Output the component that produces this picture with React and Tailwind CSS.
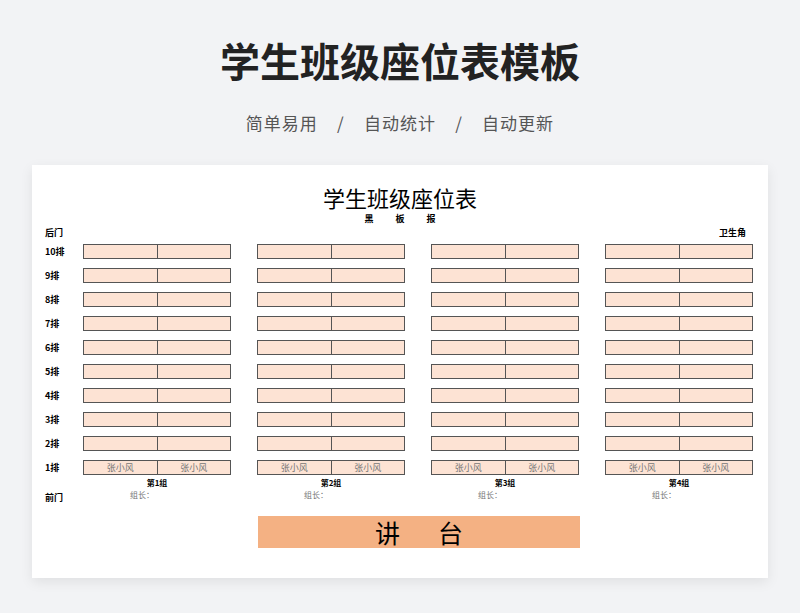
export default function App() {
  const rows = ["10排","9排","8排","7排","6排","5排","4排","3排","2排","1排"];
  const groups = [0,1,2,3];
  const f = { fontFamily: '"Noto Sans CJK SC", sans-serif' };
  return (
    <div className="w-[800px] h-[613px] bg-[#f2f3f5] flex flex-col items-center" style={f}>
      <div className="mt-[34px] text-[40px] leading-[52px] font-bold text-[#222]">学生班级座位表模板</div>
      <div className="mt-[25px] text-[17px] leading-[24px] text-[#555] tracking-[1px]">简单易用&nbsp;&nbsp;&nbsp;&nbsp;/&nbsp;&nbsp;&nbsp;&nbsp;自动统计&nbsp;&nbsp;&nbsp;&nbsp;/&nbsp;&nbsp;&nbsp;&nbsp;自动更新</div>
      <div className="mt-[30px] w-[736px] h-[413px] bg-white shadow-[0_4px_12px_rgba(0,0,0,0.08)] relative text-black">
        <div className="text-center text-[22px] leading-[28px] mt-[18px]">学生班级座位表</div>
        <div className="flex items-center h-[14px] mt-[1px]">
          <div className="w-[51px]"></div>
          <div className="flex-1 text-center text-[9px] font-bold tracking-[22px] pl-[22px]">黑板报</div>
          <div className="w-[51px]"></div>
        </div>
        <div className="flex justify-between text-[9px] font-bold px-[13px] pr-[22px] h-[14px] items-center">
          <span>后门</span><span>卫生角</span>
        </div>
        <div className="mt-[4px] flex flex-col gap-[9px]">
          {rows.map((r, i) => (
            <div key={r} className="flex items-center h-[15px]">
              <div className="w-[51px] pl-[13px] text-[9px] font-bold">{r}</div>
              <div className="flex gap-[26px]">
                {groups.map(g => (
                  <div key={g} className="w-[148px] h-[15px] flex border border-[#555] bg-[#fde3d4]">
                    <div className="flex-1 border-r border-[#555] text-[9px] text-[#777] text-center leading-[13px]">{i === 9 ? "张小风" : ""}</div>
                    <div className="flex-1 text-[9px] text-[#777] text-center leading-[13px]">{i === 9 ? "张小风" : ""}</div>
                  </div>
                ))}
              </div>
            </div>
          ))}
        </div>
        <div className="flex mt-[2px]">
          <div className="w-[51px] pl-[13px] text-[9px] font-bold pt-[14px]">前门</div>
          <div className="flex gap-[26px]">
            {groups.map(g => (
              <div key={g} className="w-[148px] flex flex-col items-center text-[8px] leading-[12px]">
                <span className="font-bold">第{g + 1}组</span>
                <span className="text-[#777] pr-[30px]">组长：</span>
              </div>
            ))}
          </div>
        </div>
        <div className="flex mt-[11px]">
          <div className="ml-[226px] w-[322px] h-[32px] bg-[#f4b183] text-[25px] leading-[32px] text-center tracking-[38px] pl-[38px]">讲台</div>
        </div>
      </div>
    </div>
  );
}
